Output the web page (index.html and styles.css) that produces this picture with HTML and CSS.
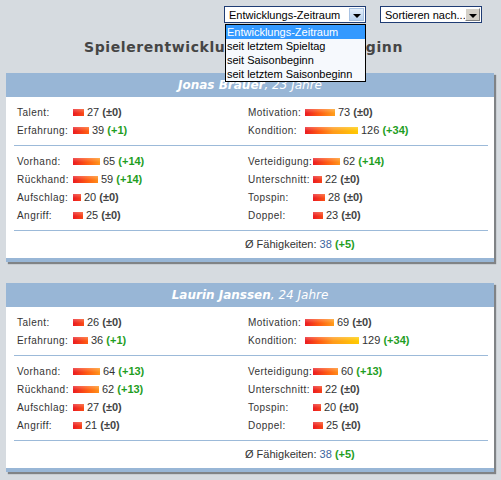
FILE: index.html
```html
<!DOCTYPE html>
<html lang="de">
<head>
  <meta charset="UTF-8" />
  <meta name="viewport" content="width=device-width, initial-scale=1.0">
  <title>Spielerentwicklung</title>
  <link rel="stylesheet" href="styles.css">
</head>
<body>
  <div class="toolbar">
    <div class="select select-period">
      <span class="select-text">Entwicklungs-Zeitraum</span>
      <span class="select-btn"><i></i></span>
      <ul class="select-list">
        <li class="active">Entwicklungs-Zeitraum</li>
        <li>seit letztem Spieltag</li>
        <li>seit Saisonbeginn</li>
        <li>seit letztem Saisonbeginn</li>
      </ul>
    </div>
    <div class="select select-sort">
      <span class="select-text">Sortieren nach...</span>
      <span class="select-btn"><i></i></span>
    </div>
  </div>

  <h2 class="page-title">Spielerentwicklung seit Saisonbeginn</h2>

  <div class="player">
    <div class="player-head"><b>Jonas Brauer</b>, 23 Jahre</div>
    <div class="player-body">
      <div class="stats">
        <span class="lbl">Talent:</span>
        <span class="val"><span class="bar" style="width:11px"></span>27 <b>(±0)</b></span>
        <span class="lbl">Motivation:</span>
        <span class="val"><span class="bar" style="width:30px"></span>73 <b>(±0)</b></span>
        <span class="lbl">Erfahrung:</span>
        <span class="val"><span class="bar" style="width:16px"></span>39 <b class="up">(+1)</b></span>
        <span class="lbl">Kondition:</span>
        <span class="val"><span class="bar" style="width:53px"></span>126 <b class="up">(+34)</b></span>
      </div>
      <div class="stats stats-skills">
        <span class="lbl">Vorhand:</span>
        <span class="val"><span class="bar" style="width:27px"></span>65 <b class="up">(+14)</b></span>
        <span class="lbl">Verteidigung:</span>
        <span class="val"><span class="bar" style="width:27px"></span>62 <b class="up">(+14)</b></span>
        <span class="lbl">Rückhand:</span>
        <span class="val"><span class="bar" style="width:25px"></span>59 <b class="up">(+14)</b></span>
        <span class="lbl">Unterschnitt:</span>
        <span class="val"><span class="bar" style="width:9px"></span>22 <b>(±0)</b></span>
        <span class="lbl">Aufschlag:</span>
        <span class="val"><span class="bar" style="width:8px"></span>20 <b>(±0)</b></span>
        <span class="lbl">Topspin:</span>
        <span class="val"><span class="bar" style="width:12px"></span>28 <b>(±0)</b></span>
        <span class="lbl">Angriff:</span>
        <span class="val"><span class="bar" style="width:10px"></span>25 <b>(±0)</b></span>
        <span class="lbl">Doppel:</span>
        <span class="val"><span class="bar" style="width:10px"></span>23 <b>(±0)</b></span>
      </div>
      <div class="avg">Ø Fähigkeiten: <span class="avg-num">38</span> <b class="up">(+5)</b></div>
    </div>
  </div>

  <div class="player">
    <div class="player-head"><b>Laurin Janssen</b>, 24 Jahre</div>
    <div class="player-body">
      <div class="stats">
        <span class="lbl">Talent:</span>
        <span class="val"><span class="bar" style="width:11px"></span>26 <b>(±0)</b></span>
        <span class="lbl">Motivation:</span>
        <span class="val"><span class="bar" style="width:29px"></span>69 <b>(±0)</b></span>
        <span class="lbl">Erfahrung:</span>
        <span class="val"><span class="bar" style="width:15px"></span>36 <b class="up">(+1)</b></span>
        <span class="lbl">Kondition:</span>
        <span class="val"><span class="bar" style="width:54px"></span>129 <b class="up">(+34)</b></span>
      </div>
      <div class="stats stats-skills">
        <span class="lbl">Vorhand:</span>
        <span class="val"><span class="bar" style="width:27px"></span>64 <b class="up">(+13)</b></span>
        <span class="lbl">Verteidigung:</span>
        <span class="val"><span class="bar" style="width:25px"></span>60 <b class="up">(+13)</b></span>
        <span class="lbl">Rückhand:</span>
        <span class="val"><span class="bar" style="width:26px"></span>62 <b class="up">(+13)</b></span>
        <span class="lbl">Unterschnitt:</span>
        <span class="val"><span class="bar" style="width:9px"></span>22 <b>(±0)</b></span>
        <span class="lbl">Aufschlag:</span>
        <span class="val"><span class="bar" style="width:11px"></span>27 <b>(±0)</b></span>
        <span class="lbl">Topspin:</span>
        <span class="val"><span class="bar" style="width:8px"></span>20 <b>(±0)</b></span>
        <span class="lbl">Angriff:</span>
        <span class="val"><span class="bar" style="width:9px"></span>21 <b>(±0)</b></span>
        <span class="lbl">Doppel:</span>
        <span class="val"><span class="bar" style="width:10px"></span>25 <b>(±0)</b></span>
      </div>
      <div class="avg">Ø Fähigkeiten: <span class="avg-num">38</span> <b class="up">(+5)</b></div>
    </div>
  </div>
</body>
</html>
```

FILE: styles.css
```css
body {
  margin: 0;
  padding: 0;
  background-color: #d6dbe0;
  font-family: "Liberation Sans", Arial, sans-serif;
  font-size: 11px;
  color: #333;
}
.toolbar {
  display: flex;
  gap: 14px;
  padding: 6px 0 0 224px;
}
.select {
  position: relative;
  display: flex;
  align-items: center;
  height: 17px;
  box-sizing: border-box;
  border: 1px solid #1f3c74;
  background-color: #fff;
  padding: 1px;
  color: #000;
}
.select-period {
  width: 142px;
}
.select-sort {
  width: 102px;
}
.select-text {
  flex: 1;
  padding-left: 3px;
  white-space: nowrap;
  overflow: hidden;
}
.select-btn {
  display: flex;
  align-items: center;
  justify-content: center;
  width: 15px;
  height: 13px;
  box-sizing: border-box;
  border: 1px solid #a9c3e3;
  background: linear-gradient(#e4effb, #b9d2ef);
}
.select-sort .select-btn {
  border-color: #fff #808080 #808080 #fff;
  background: #d4d0c8;
}
.select-btn i {
  margin-top: 2px;
  border-left: 4px solid transparent;
  border-right: 4px solid transparent;
  border-top: 4px solid #000;
}
.select-list {
  position: absolute;
  top: 17px;
  left: 0;
  right: -1px;
  margin: 0;
  padding: 0;
  list-style: none;
  border: 1px solid #000;
  background-color: #f6f9fd;
  z-index: 5;
}
.select-list li {
  height: 14px;
  line-height: 14px;
  padding-left: 1px;
  white-space: nowrap;
}
.select-list li.active {
  background-color: #3399ff;
  color: #fff;
}
.page-title {
  margin: 15px 0 17px;
  padding-right: 14px;
  height: 18px;
  line-height: 18px;
  text-align: center;
  font-family: "DejaVu Sans", Verdana, sans-serif;
  font-size: 14px;
  letter-spacing: 0.6px;
  color: #454545;
}
.player {
  margin: 0 7px 21px 6px;
  background-color: #fff;
  border-bottom: 4px solid #98b6d6;
  box-shadow: 2px 2px 1px rgba(0, 0, 0, 0.4);
}
.player-head {
  height: 24px;
  line-height: 24px;
  background-color: #98b6d6;
  color: #fff;
  text-align: center;
  font-family: "DejaVu Sans", Verdana, sans-serif;
  font-size: 12px;
  font-style: italic;
}
.player-body {
  padding: 0 6px 5px 8px;
}
.stats {
  display: grid;
  grid-template-columns: 56px 175px 57px 1fr;
  grid-auto-rows: 18px;
  padding: 6px 0 6px 3px;
  border-bottom: 1px solid #9cbad9;
}
.stats-skills {
  grid-template-columns: 56px 175px 65px 1fr;
}
.lbl {
  display: flex;
  align-items: center;
  font-size: 10px;
  letter-spacing: 0.45px;
  white-space: nowrap;
}
.val {
  display: flex;
  align-items: center;
  white-space: pre;
}
.val b {
  color: #444;
}
.bar {
  height: 7px;
  margin-right: 3px;
  background-image: linear-gradient(rgba(255, 255, 255, 0.25), rgba(255, 255, 255, 0) 60%),
    linear-gradient(to right, #ea1a22, #ff5a12 14px, #ff9a1a 28px, #ffcc00 54px);
  background-size: 100% 100%, 54px 100%;
  background-repeat: no-repeat;
}
b.up {
  color: #1f9e1f;
}
.avg {
  height: 18px;
  line-height: 18px;
  padding: 4px 0 0 231px;
}
.avg-num {
  color: #3a64a0;
}
```
